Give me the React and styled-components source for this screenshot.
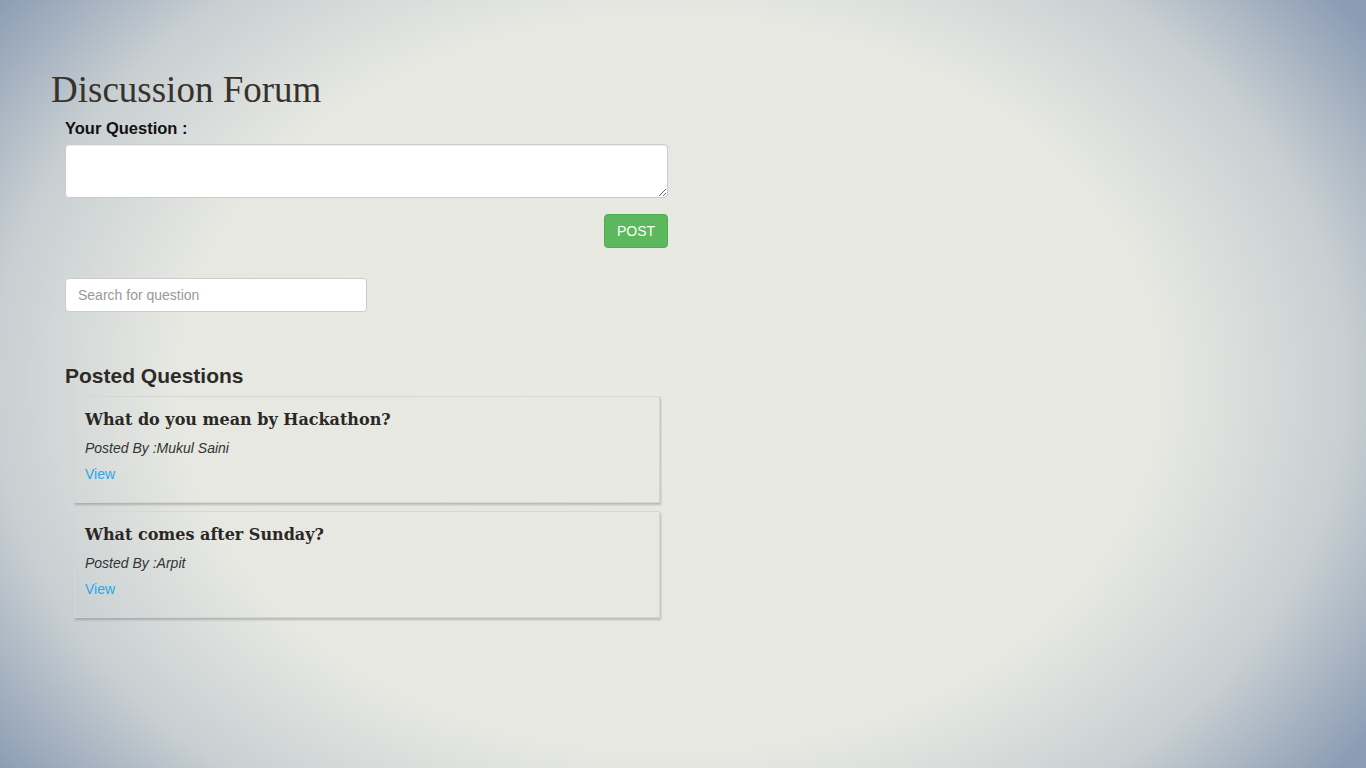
import React from "react";
import styled, { createGlobalStyle } from "styled-components";

const questions = [
  { id: 1, title: "What do you mean by Hackathon?", author: "Mukul Saini" },
  { id: 2, title: "What comes after Sunday?", author: "Arpit" },
];

const GlobalStyle = createGlobalStyle`
  html, body {
    margin: 0;
    min-height: 100%;
  }
  body {
    font-family: "Liberation Sans", Arial, sans-serif;
    font-size: 14px;
    color: #333;
    min-height: 768px;
    background: radial-gradient(
      ellipse 62% 83% at 49% 50%,
      #e8e9e3 0%,
      #e7e8e2 58%,
      #c8cfd2 80%,
      #8a9bb3 100%
    );
    background-color: #8a9bb3;
    background-attachment: fixed;
  }
`;

const Page = styled.div`
  padding: 70px 0 0 51px;
  width: 620px;
`;

const Title = styled.h1`
  margin: 0;
  font-family: "Liberation Serif", "Times New Roman", serif;
  font-weight: 400;
  font-size: 37px;
  line-height: 40px;
  color: #38322d;
`;

const Form = styled.div`
  padding: 0 0 0 14px;
  display: flex;
  flex-direction: column;
`;

const Label = styled.label`
  font-weight: 700;
  font-size: 16.5px;
  color: #111;
  margin-top: 8px;
  line-height: 20px;
`;

const TextArea = styled.textarea`
  margin-top: 6px;
  height: 54px;
  box-sizing: border-box;
  width: 603px;
  border: 1px solid #ccc;
  border-radius: 4px;
  background: #fff;
  box-shadow: inset 0 1px 1px rgba(0, 0, 0, 0.075);
  resize: vertical;
  font-family: inherit;
`;

const Actions = styled.div`
  width: 603px;
  display: flex;
  justify-content: flex-end;
  margin-top: 16px;
`;

const PostButton = styled.button`
  background: #5cb85c;
  border: 1px solid #4cae4c;
  color: #fff;
  border-radius: 4px;
  height: 34px;
  width: 64px;
  font-family: "Liberation Sans", Arial, sans-serif;
  font-size: 14px;
  cursor: pointer;
`;

const Search = styled.input`
  margin-top: 30px;
  width: 302px;
  height: 34px;
  box-sizing: border-box;
  padding: 6px 12px;
  border: 1px solid #ccc;
  border-radius: 4px;
  font-family: "Liberation Sans", Arial, sans-serif;
  font-size: 14px;
  background: #fff;
  &::placeholder {
    color: #999;
  }
`;

const SectionTitle = styled.h3`
  margin: 52px 0 0;
  font-size: 21px;
  font-weight: 700;
  line-height: 24px;
  color: #2d2a28;
`;

const List = styled.div`
  margin: 8px 0 0 9px;
  display: flex;
  flex-direction: column;
  gap: 8px;
  width: 586px;
`;

const Card = styled.div`
  height: 107px;
  box-sizing: border-box;
  border: 1px solid #d6d6d2;
  box-shadow: 1px 2px 2px rgba(0, 0, 0, 0.2);
  padding: 12px 10px;
`;

const CardTitle = styled.h4`
  margin: 0;
  font-family: "DejaVu Serif", Georgia, serif;
  font-weight: 700;
  font-size: 16px;
  line-height: 22px;
  color: #2a2725;
`;

const Author = styled.p`
  margin: 8px 0 0;
  font-style: italic;
  font-size: 14px;
  color: #333;
  line-height: 18px;
`;

const ViewLink = styled.a`
  display: inline-block;
  margin-top: 8px;
  color: #29a7e8;
  text-decoration: none;
  font-size: 14px;
  line-height: 18px;
`;

export default function App() {
  return (
    <>
      <GlobalStyle />
      <Page>
        <Title>Discussion Forum</Title>
        <Form>
          <Label>Your Question :</Label>
          <TextArea />
          <Actions>
            <PostButton>POST</PostButton>
          </Actions>
          <Search placeholder="Search for question" />
          <SectionTitle>Posted Questions</SectionTitle>
          <List>
            {questions.map((q) => (
              <Card key={q.id}>
                <CardTitle>{q.title}</CardTitle>
                <Author>Posted By :{q.author}</Author>
                <ViewLink href="#">View</ViewLink>
              </Card>
            ))}
          </List>
        </Form>
      </Page>
    </>
  );
}
